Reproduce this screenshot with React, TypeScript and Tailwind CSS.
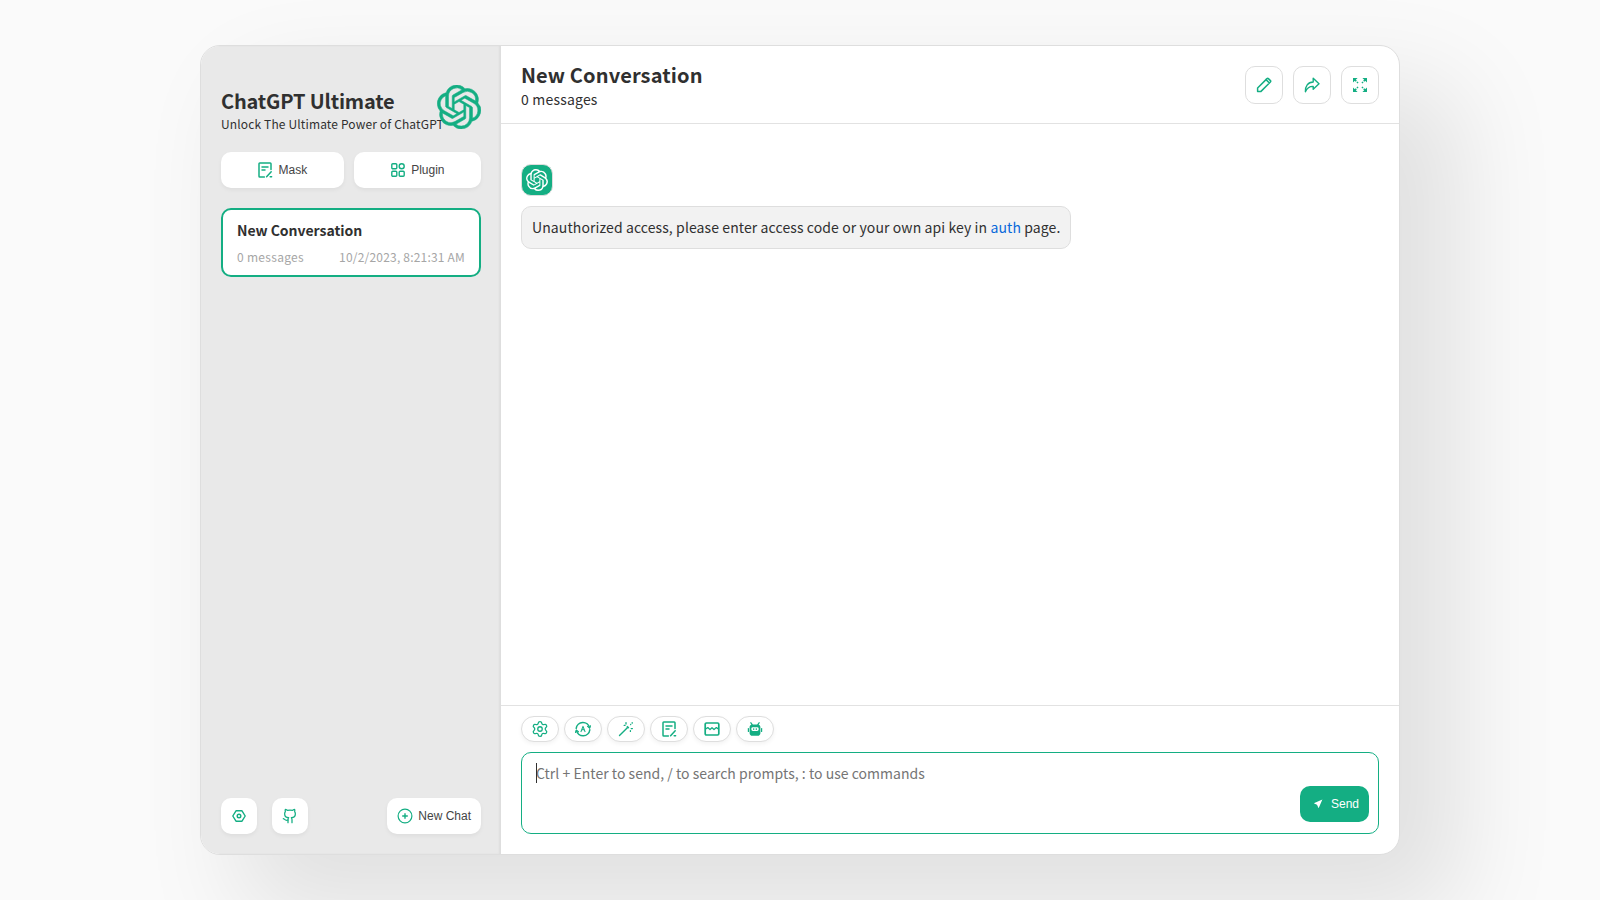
import type { ReactNode } from "react";
import { SiOpenai } from "react-icons/si";
import { Github, Settings } from "lucide-react";

const SANS = "font-['Noto_Sans_CJK_SC','Noto_Sans',sans-serif]";

function MaskIcon() {
  return (
    <svg width="16" height="16" viewBox="0 0 16 16" fill="none" stroke="#14ae83" strokeWidth="1.5" strokeLinecap="round" strokeLinejoin="round">
      <path d="M14 7.5V1.8a.8.8 0 0 0-.8-.8H2.8a.8.8 0 0 0-.8.8v12.4c0 .4.4.8.8.8h4.6" />
      <path d="M5 5h6M5 8h3" />
      <path d="M9.6 14.8l4.6-5M13.2 14.8h1.4" />
    </svg>
  );
}

function PluginIcon() {
  return (
    <svg width="16" height="16" viewBox="0 0 16 16" fill="none" stroke="#14ae83" strokeWidth="1.4">
      <rect x="1.8" y="1.8" width="5" height="5" rx="1" />
      <circle cx="11.7" cy="4.3" r="2.5" />
      <rect x="1.8" y="9.2" width="5" height="5" rx="1" />
      <rect x="9.2" y="9.2" width="5" height="5" rx="1" />
    </svg>
  );
}

function HexIcon() {
  return (
    <svg width="16" height="16" viewBox="0 0 16 16" fill="none" stroke="#14ae83" strokeWidth="1.4" strokeLinejoin="round">
      <path d="M5 2.8h6L14.2 8 11 13.2H5L1.8 8z" />
      <circle cx="8" cy="8" r="1.8" />
    </svg>
  );
}

function AddIcon() {
  return (
    <svg width="16" height="16" viewBox="0 0 16 16" fill="none" stroke="#14ae83" strokeWidth="1.2">
      <circle cx="8" cy="8" r="6.9" />
      <path d="M8 5.2v5.6M5.2 8h5.6" strokeWidth="1.4" />
    </svg>
  );
}

function RenameIcon() {
  return (
    <svg width="16" height="16" viewBox="0 0 16 16" fill="none" stroke="#14ae83" strokeWidth="1.5" strokeLinejoin="round">
      <path d="M1.6 14.4v-3.4l8.4-8.4 3.4 3.4-8.4 8.4z" />
      <path d="M10 2.6l1-1a1 1 0 0 1 1.4 0l2 2a1 1 0 0 1 0 1.4l-1 1" />
    </svg>
  );
}

function ShareIcon() {
  return (
    <svg width="16" height="16" viewBox="0 0 16 16" fill="none" stroke="#14ae83" strokeWidth="1.4" strokeLinejoin="round" strokeLinecap="round">
      <path d="M9.2 1.2L15 6.8l-5.8 5.4V9.4C5.8 9.2 3.2 10.8 1.4 14.8c-.4-5.6 2.6-9.6 7.8-9.8z" />
    </svg>
  );
}

function MaxIcon() {
  return (
    <svg width="16" height="16" viewBox="0 0 16 16" fill="#14ae83">
      <path d="M1 1h4.6L1 5.6zM15 1v4.6L10.4 1zM1 15v-4.6L5.6 15zM15 15h-4.6L15 10.4z" />
      <path d="M2.6 2.6l3.4 3.4M13.4 2.6L10 6M2.6 13.4L6 10M13.4 13.4L10 10" stroke="#14ae83" strokeWidth="1.6" strokeDasharray="2.4 1 1.4" fill="none" />
    </svg>
  );
}

function AutoIcon() {
  return (
    <svg width="16" height="16" viewBox="0 0 16 16" fill="none" stroke="#14ae83" strokeWidth="1.5" strokeLinecap="round" strokeLinejoin="round">
      <path d="M1.2 7.4a6.8 6.8 0 0 1 13.4-.6" />
      <path d="M14.8 8.8a6.8 6.8 0 0 1-13.4.6" />
      <path d="M12.6 5.4l2 1.6 1-2.2M3.4 10.8L1.4 9.2l-1 2.2" strokeWidth="1.2" />
      <path d="M6 10.6L8 5.4l2 5.2M6.8 8.8h2.4" strokeWidth="1.1" />
    </svg>
  );
}

function WandIcon() {
  return (
    <svg width="16" height="16" viewBox="0 0 16 16" fill="none" stroke="#14ae83" strokeLinecap="round">
      <path d="M1.5 14.5l7.6-7.6" strokeWidth="1.4" />
      <path d="M9.2 6.8l1.2-1.2" strokeWidth="2.6" strokeLinecap="butt" />
      <path d="M8 1.6v1.4M12.6 3.4l.1.1M14.2 1.6v.6M14.4 7.6h-1.2M12.4 9.6v.8M7 4.4h-.8" strokeWidth="1.3" />
    </svg>
  );
}

function BreakIcon() {
  return (
    <svg width="16" height="16" viewBox="0 0 16 16" fill="none" stroke="#14ae83" strokeWidth="1.7" strokeLinejoin="round">
      <rect x="1.2" y="2" width="13.6" height="12" rx="1.2" />
      <path d="M1.2 8.2l2.6-1.6 2.2 2 2-1.8 2 1.8 2.4-2 2.4 1.6" strokeWidth="1.3" />
    </svg>
  );
}

function RobotIcon() {
  return (
    <svg width="16" height="16" viewBox="0 0 16 16" fill="#14ae83">
      <path d="M4 1l1.9 2.4h4.2L12 1l1 .8-1.4 1.8c1 .4 1.8 1.4 1.8 2.6v6c0 1.5-1.2 2.6-2.6 2.6H5.2c-1.4 0-2.6-1.1-2.6-2.6v-6c0-1.2.8-2.2 1.8-2.6L3 1.8z" />
      <rect x="4.4" y="6.2" width="7.2" height="3.8" rx="1.4" fill="#fff" />
      <rect x="6" y="7.4" width="1.3" height="1.4" />
      <rect x="8.7" y="7.4" width="1.3" height="1.4" />
      <rect x="0.8" y="7" width="1.2" height="4" rx=".5" />
      <rect x="14" y="7" width="1.2" height="4" rx=".5" />
    </svg>
  );
}

function SendIcon() {
  return (
    <svg width="16" height="16" viewBox="0 0 16 16" fill="#fff">
      <path d="M12.4 3.6L3.8 7.2l3.2 1.6 1.6 3.4z" />
    </svg>
  );
}

function SidebarButton({ children, className = "" }: { children: ReactNode; className?: string }) {
  return (
    <button className={`flex h-9 items-center justify-center rounded-[10px] bg-white font-['Liberation_Sans',sans-serif] text-xs text-[#444] shadow-[0_2px_4px_0_rgba(0,0,0,0.05)] ${className}`}>
      {children}
    </button>
  );
}

function HeaderAction({ children }: { children: ReactNode }) {
  return (
    <button className="ml-2.5 flex size-[38px] items-center justify-center rounded-[10px] border border-[#dedede] bg-white">
      {children}
    </button>
  );
}

function InputAction({ children }: { children: ReactNode }) {
  return (
    <button className="mr-[5px] flex h-[26px] w-[38px] items-center justify-center rounded-[20px] border border-[#dedede] bg-white shadow-[0_2px_4px_0_rgba(0,0,0,0.05)]">
      {children}
    </button>
  );
}

export default function App() {
  return (
    <div className={`flex h-[900px] w-full items-center justify-center bg-[#fafafa] text-[#303030] ${SANS}`}>
      <div className="flex h-[810px] w-[1200px] overflow-hidden rounded-[20px] border border-[#dedede] bg-white shadow-[50px_50px_100px_10px_rgba(0,0,0,0.1)]">
        <aside className="flex w-[300px] shrink-0 flex-col bg-[#e9e9e9] p-5 shadow-[inset_-2px_0_2px_0_rgba(0,0,0,0.05)]">
          <div className="relative py-5">
            <div className="text-[20px] font-bold leading-[29px] tracking-[-0.17px]">ChatGPT Ultimate</div>
            <div className="text-xs leading-[17px] tracking-[0.14px]">Unlock The Ultimate Power of ChatGPT</div>
            <SiOpenai strokeWidth={0.3} className="absolute bottom-[23px] right-0 size-[44px] text-[#14ae83]" />
          </div>

          <div className="mb-5 flex gap-2.5">
            <SidebarButton className="grow px-2.5">
              <MaskIcon />
              <span className="ml-[5px]">Mask</span>
            </SidebarButton>
            <SidebarButton className="grow px-2.5">
              <PluginIcon />
              <span className="ml-[5px]">Plugin</span>
            </SidebarButton>
          </div>

          <div className="flex-1">
            <div className="rounded-[10px] border-2 border-[#14ae83] bg-white px-3.5 py-2.5">
              <div className="text-sm font-bold leading-5 tracking-[-0.03px]">New Conversation</div>
              <div className="mt-2 flex justify-between text-xs leading-[17px] text-[#a6a6a6]">
                <span className="tracking-[0.3px]">0 messages</span>
                <span className="tracking-[0.2px]">10/2/2023, 8:21:31 AM</span>
              </div>
            </div>
          </div>

          <div className="flex items-center justify-between pt-5">
            <div className="flex gap-[15px]">
              <SidebarButton className="w-9">
                <HexIcon />
              </SidebarButton>
              <SidebarButton className="w-9">
                <Github size={16} color="#14ae83" strokeWidth={1.9} />
              </SidebarButton>
            </div>
            <SidebarButton className="px-2.5">
              <AddIcon />
              <span className="ml-[5px]">New Chat</span>
            </SidebarButton>
          </div>
        </aside>

        <main className="flex min-w-0 flex-1 flex-col">
          <header className="flex items-center justify-between border-b border-[#e2e2e2] px-5 py-3.5">
            <div>
              <div className="text-[20px] font-bold leading-[29px] tracking-[0.13px]">New Conversation</div>
              <div className="text-sm leading-5 tracking-[0.2px]">0 messages</div>
            </div>
            <div className="flex">
              <HeaderAction>
                <RenameIcon />
              </HeaderAction>
              <HeaderAction>
                <ShareIcon />
              </HeaderAction>
              <HeaderAction>
                <MaxIcon />
              </HeaderAction>
            </div>
          </header>

          <div className="flex-1 p-5 pt-10">
            <div className="flex size-[32px] items-center justify-center rounded-[10px] border border-[#dedede] bg-[#14ae83]">
              <SiOpenai className="size-[22px] text-white" />
            </div>
            <div className="mt-2.5 w-fit rounded-[10px] border border-[#dedede] bg-[#f2f2f2] p-2.5 text-sm leading-[21px] tracking-[0.1px]">
              Unauthorized access, please enter access code or your own api key in{" "}
              <span className="text-[#0969da]">auth</span> page.
            </div>
          </div>

          <div className="border-t border-[#e2e2e2] px-5 pb-5 pt-2.5">
            <div className="mb-2.5 flex">
              <InputAction>
                <Settings size={18} color="#14ae83" strokeWidth={1.7} />
              </InputAction>
              <InputAction>
                <AutoIcon />
              </InputAction>
              <InputAction>
                <WandIcon />
              </InputAction>
              <InputAction>
                <MaskIcon />
              </InputAction>
              <InputAction>
                <BreakIcon />
              </InputAction>
              <InputAction>
                <RobotIcon />
              </InputAction>
            </div>
            <div className="relative h-[82px] rounded-[10px] border border-[#14ae83] bg-white">
              <div className="pl-3.5 pt-2.5 text-sm leading-5 tracking-[0.03px] text-[#757575]">
                Ctrl + Enter to send, / to search prompts, : to use commands
              </div>
              <span className="absolute left-3.5 top-2.5 h-5 w-px bg-[#303030]" />
              <button className="absolute bottom-[11px] right-[9px] flex h-9 items-center rounded-[10px] bg-[#14ae83] px-2.5 font-['Liberation_Sans',sans-serif] text-xs text-white">
                <SendIcon />
                <span className="ml-[5px]">Send</span>
              </button>
            </div>
          </div>
        </main>
      </div>
    </div>
  );
}
